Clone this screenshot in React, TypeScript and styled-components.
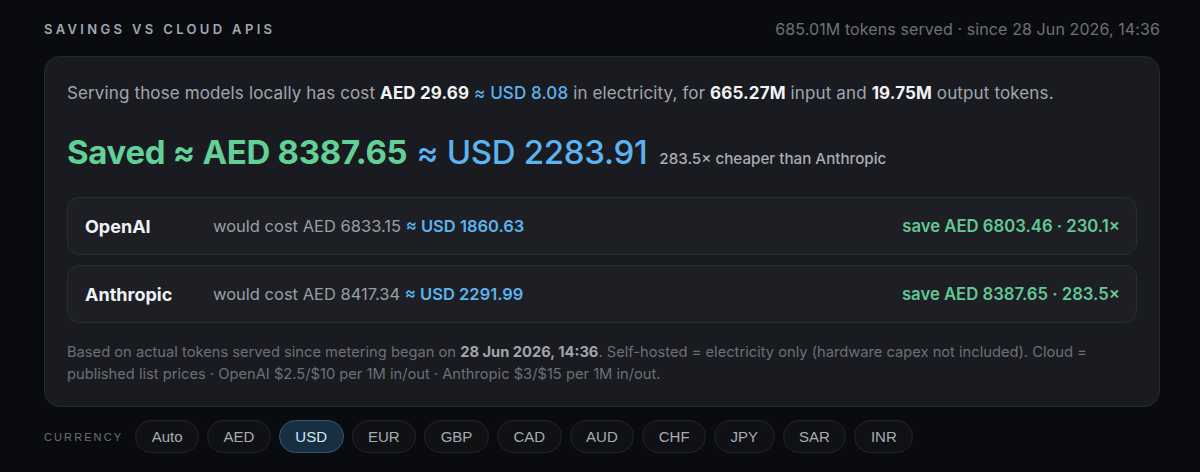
import React from "react";
import styled, { createGlobalStyle } from "styled-components";

const Global = createGlobalStyle`
  html, body { margin: 0; padding: 0; background: #0a0b0f; }
  body { font-family: Inter, "Noto Sans", sans-serif; -webkit-font-smoothing: antialiased; }
`;

const Page = styled.div`
  padding: 19px 40px 20px 44px;
  display: flex;
  flex-direction: column;
`;

const Header = styled.div`
  display: flex;
  justify-content: space-between;
  align-items: center;
  height: 20px;
  margin-bottom: 17px;
`;

const Title = styled.h2`
  margin: 0;
  font-size: 13px;
  font-weight: 600;
  letter-spacing: 3.35px;
  color: #a3a7af;
  text-transform: uppercase;
`;

const Meta = styled.div`
  font-size: 16px;
  letter-spacing: 0.1px;
  color: #6d717a;
`;

const Card = styled.section`
  background: #191b21;
  border: 1px solid #272a31;
  border-radius: 16px;
  padding: 24px 22px 21px 22px;
  display: flex;
  flex-direction: column;
`;

const Intro = styled.p`
  margin: 0;
  font-size: 17px;
  letter-spacing: 0.13px;
  line-height: 24px;
  color: #a2a6ae;
`;

const Strong = styled.b`
  color: #f2f3f5;
  font-weight: 700;
`;

const Blue = styled.span<{ $w?: number }>`
  color: #5cb3ef;
  font-weight: ${(p) => p.$w ?? 500};
`;

const Green = styled.span`
  color: #62d197;
  font-weight: 700;
`;

const BigLine = styled.div`
  margin-top: 27px;
  display: flex;
  align-items: baseline;
  gap: 12px;
`;

const BigValue = styled.div`
  font-size: 33px;
  line-height: 40px;
  letter-spacing: -0.3px;
`;

const Ratio = styled.span`
  font-size: 15.2px;
  font-weight: 500;
  color: #a9adb4;
`;

const Rows = styled.div`
  margin-top: 25px;
  display: flex;
  flex-direction: column;
  gap: 10px;
`;

const Row = styled.div`
  display: flex;
  align-items: center;
  height: 56px;
  padding: 0 16px 0 17px;
  background: #1d1f25;
  border: 1px solid #2a2d34;
  border-radius: 12px;
`;

const Provider = styled.div`
  width: 128px;
  font-size: 18px;
  font-weight: 700;
  color: #f1f2f4;
`;

const Cost = styled.div`
  flex: 1;
  font-size: 16.5px;
  color: #9a9ea6;
`;

const Save = styled.div`
  font-size: 16.7px;
  font-weight: 600;
  color: #62c894;
`;

const Foot = styled.p`
  margin: 18px 0 0 0;
  font-size: 14.7px;
  line-height: 22px;
  color: #6c7078;
`;

const FootStrong = styled.b`
  color: #a0a4ab;
  font-weight: 700;
`;

const CurrencyBar = styled.div`
  margin-top: 13px;
  display: flex;
  align-items: center;
  gap: 8px;
`;

const Label = styled.span`
  font-family: "Liberation Sans", Arial, sans-serif;
  font-size: 11px;
  letter-spacing: 2.1px;
  color: #6b6f77;
  margin-right: 4px;
`;

const Chip = styled.button<{ $active?: boolean }>`
  font-family: "Liberation Sans", Arial, sans-serif;
  font-size: 15px;
  height: 33px;
  padding: 0 15.5px;
  margin: 0;
  border-radius: 17px;
  border: 1px solid ${(p) => (p.$active ? "#2f5a74" : "#22252b")};
  background: ${(p) => (p.$active ? "#172f40" : "#0f1115")};
  color: ${(p) => (p.$active ? "#d4e7f5" : "#a8acb3")};
  cursor: pointer;
`;

const providers = [
  { name: "OpenAI", aed: "6833.15", usd: "1860.63", save: "6803.46", x: "230.1×" },
  { name: "Anthropic", aed: "8417.34", usd: "2291.99", save: "8387.65", x: "283.5×" },
];

const currencies = ["Auto", "AED", "USD", "EUR", "GBP", "CAD", "AUD", "CHF", "JPY", "SAR", "INR"];

export default function App() {
  return (
    <>
      <Global />
      <Page>
        <Header>
          <Title>Savings vs Cloud APIs</Title>
          <Meta>685.01M tokens served · since 28 Jun 2026, 14:36</Meta>
        </Header>
        <Card>
          <Intro>
            Serving those models locally has cost <Strong>AED 29.69</Strong>{" "}
            <Blue>≈ USD 8.08</Blue> in electricity, for <Strong>665.27M</Strong> input and{" "}
            <Strong>19.75M</Strong> output tokens.
          </Intro>
          <BigLine>
            <BigValue>
              <Green>Saved ≈ AED 8387.65</Green> <Blue>≈ USD 2283.91</Blue>
            </BigValue>
            <Ratio>283.5× cheaper than Anthropic</Ratio>
          </BigLine>
          <Rows>
            {providers.map((p) => (
              <Row key={p.name}>
                <Provider>{p.name}</Provider>
                <Cost>
                  would cost AED {p.aed} <Blue $w={600}>≈ USD {p.usd}</Blue>
                </Cost>
                <Save>
                  save AED {p.save} · {p.x}
                </Save>
              </Row>
            ))}
          </Rows>
          <Foot>
            Based on actual tokens served since metering began on{" "}
            <FootStrong>28 Jun 2026, 14:36</FootStrong>. Self-hosted = electricity only (hardware
            capex not included). Cloud = published list prices · OpenAI $2.5/$10 per 1M in/out ·
            Anthropic $3/$15 per 1M in/out.
          </Foot>
        </Card>
        <CurrencyBar>
          <Label>CURRENCY</Label>
          {currencies.map((c) => (
            <Chip key={c} $active={c === "USD"}>
              {c}
            </Chip>
          ))}
        </CurrencyBar>
      </Page>
    </>
  );
}
